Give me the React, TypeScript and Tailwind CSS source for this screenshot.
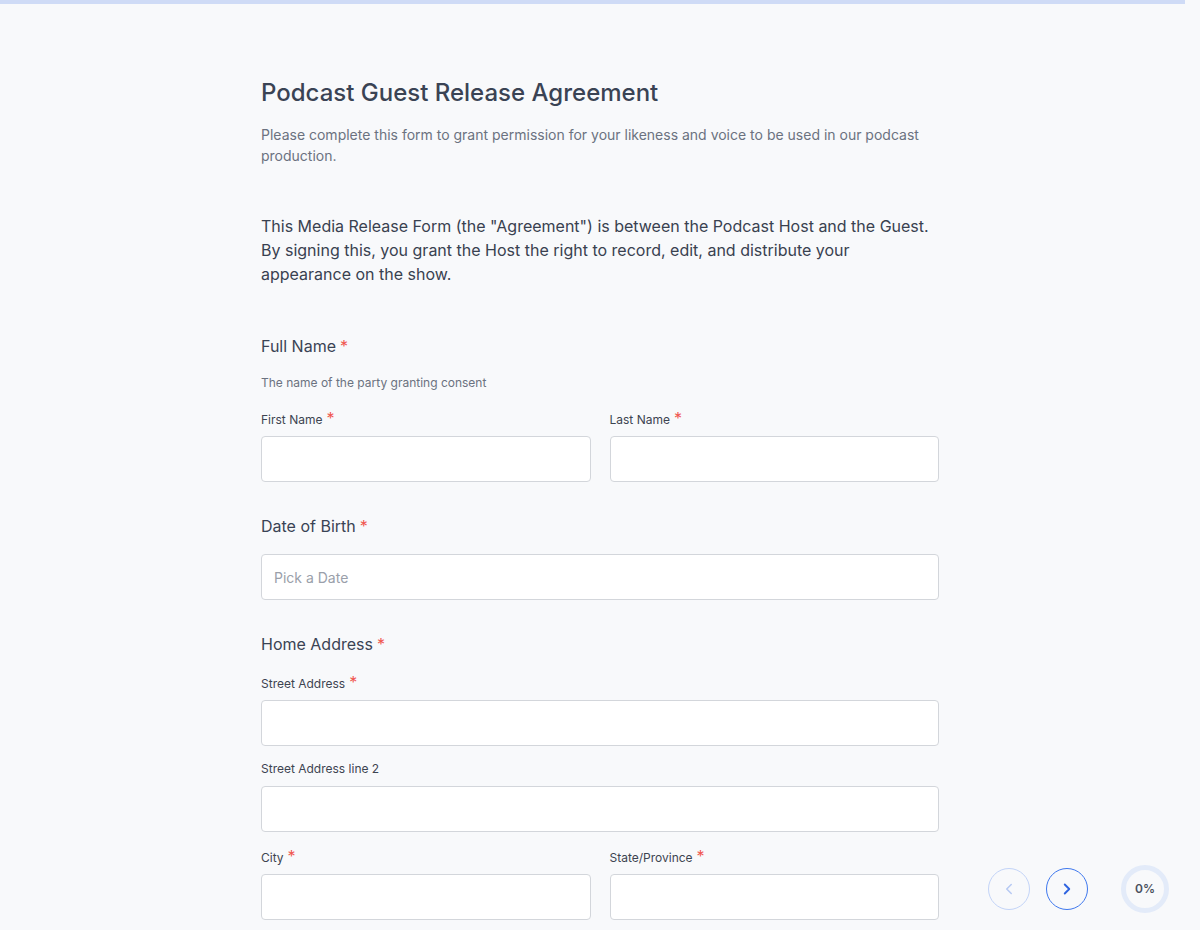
import { ChevronLeft, ChevronRight } from 'lucide-react';

function Req({ big = false }: { big?: boolean }) {
    return <span className={`text-[#f0564f] ml-1 ${big ? 'text-[16px] leading-none' : ''}`}>*</span>;
}

function Field({ label, className = '' }: { label?: string; className?: string }) {
    return (
        <div className={`flex flex-col ${className}`}>
            {label && (
                <label className="block h-[18px] text-[12px] leading-[18px] text-[#3d4451] mb-[8px]">
                    {label}
                    <Req big />
                </label>
            )}
            <input
                type="text"
                className="h-[46px] w-full bg-white border border-[#d3d6db] rounded-[4px] px-3 text-sm focus:outline-none"
            />
        </div>
    );
}

export default function App() {
    return (
        <div className="relative min-h-[930px] h-[930px] overflow-hidden bg-[#f8f9fb]" style={{ fontFamily: 'Inter, "Noto Sans", sans-serif' }}>
            <div className="h-[4px] w-[1185px] bg-[#cfdbf6]" />

            <div className="w-[678px] ml-[261px] pt-[73px]">
                <h1 className="text-[24px] leading-[32px] font-medium text-[#3a4354]">
                    Podcast Guest Release Agreement
                </h1>
                <p className="mt-[15px] text-[14px] leading-[21px] text-[#6b7280]">
                    Please complete this form to grant permission for your likeness and voice to be used in our podcast production.
                </p>
                <p className="mt-[48px] text-[16px] leading-[24px] text-[#394150]">
                    This Media Release Form (the "Agreement") is between the Podcast Host and the Guest. By signing this, you grant the Host the right to record, edit, and distribute your appearance on the show.
                </p>

                <div className="mt-[48px]">
                    <div className="text-[16px] leading-[24px] text-[#3a4354]">
                        Full Name
                        <Req />
                    </div>
                    <div className="mt-[17px] text-[12px] leading-[16px] text-[#6b7280]">The name of the party granting consent</div>
                    <div className="mt-[19px] grid grid-cols-2 gap-[19px]">
                        <Field label="First Name" />
                        <Field label="Last Name" />
                    </div>
                </div>

                <div className="mt-[32px]">
                    <div className="text-[16px] leading-[24px] text-[#3a4354]">
                        Date of Birth
                        <Req />
                    </div>
                    <input
                        type="text"
                        placeholder="Pick a Date"
                        className="mt-[16px] h-[46px] w-full bg-white border border-[#d3d6db] rounded-[4px] px-3 text-[14px] text-[#3a4354] placeholder:text-[#9aa0aa] focus:outline-none"
                    />
                </div>

                <div className="mt-[32px]">
                    <div className="text-[16px] leading-[24px] text-[#3a4354]">
                        Home Address
                        <Req />
                    </div>
                    <Field label="Street Address" className="mt-[18px]" />
                    <div className="mt-[14px] flex flex-col">
                        <label className="block h-[18px] text-[12px] leading-[18px] text-[#3d4451] mb-[8px]">Street Address line 2</label>
                        <input type="text" className="h-[46px] w-full bg-white border border-[#d3d6db] rounded-[4px] px-3 text-sm focus:outline-none" />
                    </div>
                    <div className="mt-[16px] grid grid-cols-2 gap-[19px]">
                        <Field label="City" />
                        <Field label="State/Province" />
                    </div>
                </div>
            </div>

            <div className="absolute left-[988px] top-[868px] flex items-center gap-[16px]">
                <button className="w-[42px] h-[42px] rounded-full border border-[#c3d4f8] flex items-center justify-center text-[#b6c9f3]">
                    <ChevronLeft className="w-[18px] h-[18px]" strokeWidth={2} />
                </button>
                <button className="w-[42px] h-[42px] rounded-full border-[1.5px] border-[#3f78ee] flex items-center justify-center text-[#2f64e0]">
                    <ChevronRight className="w-[18px] h-[18px]" strokeWidth={2.5} />
                </button>
            </div>
            <div className="absolute left-[1121px] top-[865px] w-[48px] h-[48px] rounded-full border-[5px] border-[#e3ebf9] flex items-center justify-center text-[12px] font-semibold text-[#4a5160]">
                0%
            </div>
        </div>
    );
}
